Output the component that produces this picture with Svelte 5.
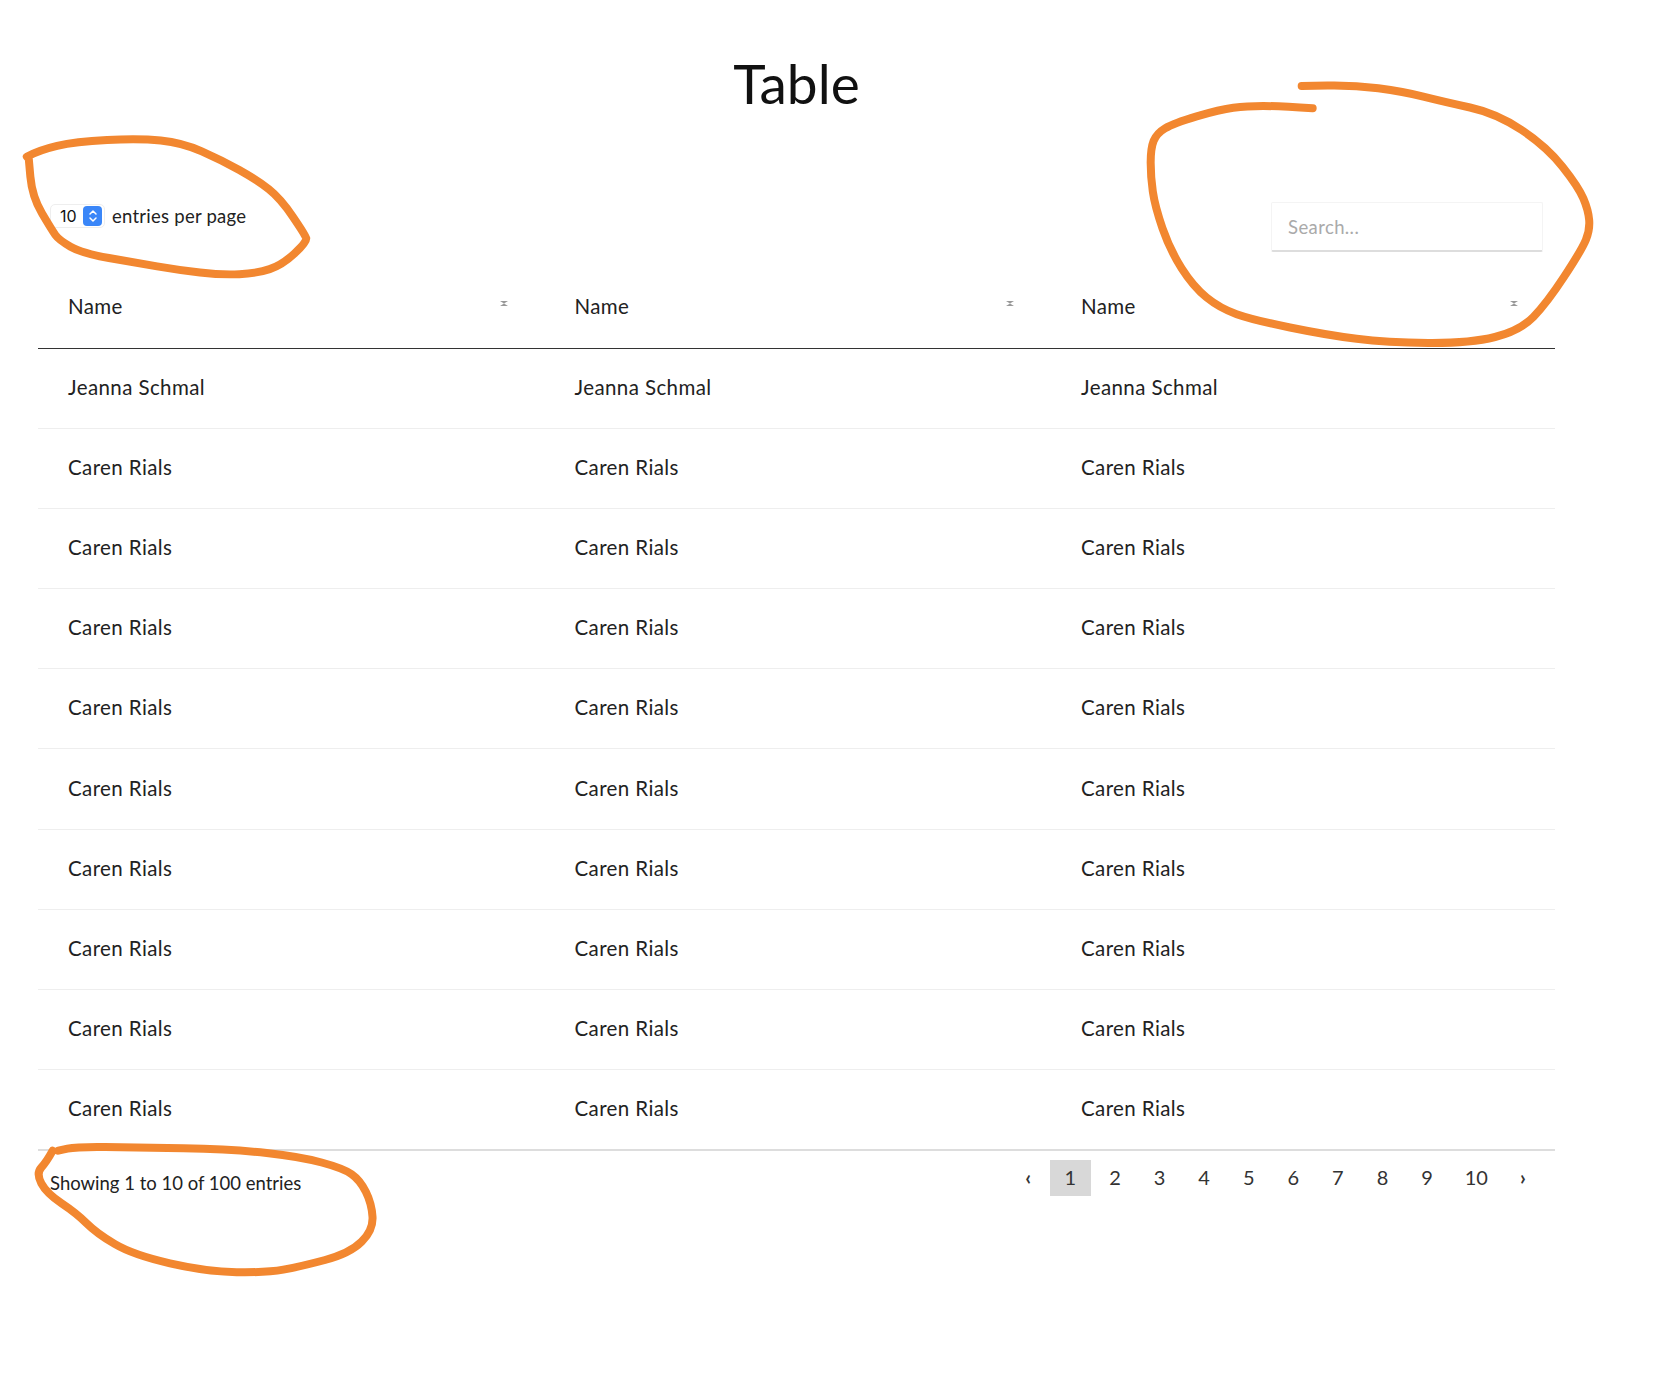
<script>
  const names = ['Jeanna Schmal', ...Array(9).fill('Caren Rials')];
  const pages = ['1', '2', '3', '4', '5', '6', '7', '8', '9', '10'];
  const columns = ['Name', 'Name', 'Name'];

  // hand drawn marks, points read off the screenshot
  const zoomed = (pts, ox, oy, kx, ky) => pts.map(([x, y]) => [ox + x / kx, oy + y / ky]);

  const marks = [
    zoomed([[75,170],[110,150],[210,125],[390,115],[510,128],[620,180],[720,240],[785,295],[855,405],[860,425],[790,495],[720,520],[620,525],[500,510],[380,488],[230,460],[165,420],[145,390],[90,290],[80,170]], 0, 100, 2.8, 3),
    zoomed([[578,145],[480,138],[380,138],[300,148],[160,190],[110,220],[92,265],[92,350],[105,440],[150,570],[220,680],[300,745],[400,780],[620,825],[800,848],[1050,850],[1200,812],[1280,730],[1385,570],[1410,510],[1405,450],[1375,380],[1280,260],[1130,160],[970,125],[850,95],[700,75],[545,78]], 1120, 60, 3, 3),
    zoomed([[158,92],[140,125],[108,160],[140,220],[230,280],[290,340],[400,405],[620,455],[800,458],[900,440],[1050,400],[1120,330],[1115,250],[1080,180],[1030,145],[900,110],[700,88],[400,82],[230,80],[175,92]], 0, 1120, 3, 3)
  ];

  function smooth(pts) {
    let d = `M${pts[0][0]} ${pts[0][1]}`;
    for (let i = 1; i < pts.length - 1; i++) {
      const mx = (pts[i][0] + pts[i + 1][0]) / 2;
      const my = (pts[i][1] + pts[i + 1][1]) / 2;
      d += ` Q${pts[i][0]} ${pts[i][1]} ${mx} ${my}`;
    }
    const last = pts[pts.length - 1];
    return d + ` L${last[0]} ${last[1]}`;
  }
</script>

<div class="page">
  <h1>Table</h1>

  <div class="toolbar">
    <div class="per-page">
      <div class="select">
        <span>10</span>
        <span class="stepper">
          <svg width="10" height="14" viewBox="0 0 10 14">
            <path d="M2 5 L5 2 L8 5 M2 9 L5 12 L8 9" fill="none" stroke="#fff" stroke-width="1.5" stroke-linecap="round" stroke-linejoin="round" />
          </svg>
        </span>
      </div>
      <span class="per-page-label">entries per page</span>
    </div>
    <input class="search" type="text" placeholder="Search..." />
  </div>

  <table>
    <thead>
      <tr>
        {#each columns as col}
          <th>
            <div class="th-inner">
              {col}
              <svg class="sort" width="8" height="5" viewBox="0 0 8 5">
                <path d="M0 0 H8 L4 2.5 L8 5 H0 L4 2.5 Z" fill="#999" />
              </svg>
            </div>
          </th>
        {/each}
      </tr>
    </thead>
    <tbody>
      {#each names as name}
        <tr>
          {#each columns as _}
            <td>{name}</td>
          {/each}
        </tr>
      {/each}
    </tbody>
  </table>

  <div class="footer">
    <div class="info">Showing 1 to 10 of 100 entries</div>
    <div class="pager">
      <span class="page-link arrow">‹</span>
      {#each pages as p, i}
        <span class="page-link" class:active={i === 0}>{p}</span>
      {/each}
      <span class="page-link arrow">›</span>
    </div>
  </div>

  <svg class="marks" width="1668" height="1398" viewBox="0 0 1668 1398">
    {#each marks as pts}
      <path d={smooth(pts)} fill="none" stroke="#f28730" stroke-width="8" stroke-linecap="round" stroke-linejoin="round" />
    {/each}
  </svg>
</div>

<style>
  :global(body) {
    margin: 0;
    background: #fff;
  }

  .page {
    position: relative;
    box-sizing: border-box;
    width: 1668px;
    min-height: 1398px;
    padding: 50px 113px 0 38px;
    font-family: Lato, "Open Sans", sans-serif;
    font-size: 20.5px;
    letter-spacing: 0.4px;
    color: #222;
  }

  h1 {
    margin: 0;
    font-size: 55px;
    font-weight: 400;
    line-height: 66px;
    letter-spacing: 0;
    text-align: center;
    color: #111;
  }

  .toolbar {
    display: flex;
    justify-content: space-between;
    align-items: flex-start;
    height: 62px;
    margin-top: 86px;
    padding-right: 12px;
  }

  .per-page {
    display: flex;
    align-items: center;
    gap: 7px;
    margin: 2px 0 0 12px;
    font-size: 18.5px;
  }

  .per-page-label {
    letter-spacing: 0.25px;
  }

  .select {
    display: flex;
    align-items: center;
    justify-content: space-between;
    box-sizing: border-box;
    width: 55px;
    height: 24px;
    padding: 0 2px 0 9px;
    border: 1px solid #eee;
    border-radius: 5px;
    font-family: Inter, sans-serif;
    font-size: 16px;
    letter-spacing: 0;
    color: #111;
  }

  .stepper {
    display: flex;
    align-items: center;
    justify-content: center;
    width: 19px;
    height: 20px;
    border-radius: 4px;
    background: #3a86f8;
  }

  .search {
    box-sizing: border-box;
    width: 272px;
    height: 50px;
    padding: 0 16px;
    border: 1px solid #f4f4f4;
    border-bottom: 2px solid #ddd;
    border-radius: 2px;
    outline: none;
    font: inherit;
    font-size: 18.5px;
    letter-spacing: 0.4px;
  }

  .search::placeholder {
    color: #aaa;
  }

  table {
    width: 1517px;
    border-collapse: collapse;
    table-layout: fixed;
  }

  th {
    box-sizing: border-box;
    width: 506.5px;
    height: 84px;
    padding: 0 30px;
    border-bottom: 1px solid #333;
    font-weight: 400;
    text-align: left;
  }

  th:last-child {
    width: auto;
  }

  .th-inner {
    position: relative;
  }

  .sort {
    position: absolute;
    top: 7px;
    right: 7px;
  }

  td {
    box-sizing: border-box;
    height: 80.2px;
    padding: 0 30px 3px;
    border-bottom: 1px solid #eee;
  }

  tbody tr:last-child td {
    border-bottom: 2px solid #ddd;
  }

  .footer {
    display: flex;
    justify-content: space-between;
    align-items: flex-start;
    padding: 9px 14px 0 12px;
  }

  .info {
    margin-top: 12px;
    font-size: 18.5px;
    letter-spacing: 0;
  }

  .pager {
    display: flex;
    gap: 3.6px;
  }

  .page-link {
    box-sizing: border-box;
    min-width: 41px;
    height: 36px;
    padding: 0 13.5px;
    font-size: 20px;
    letter-spacing: 0;
    line-height: 34px;
    text-align: center;
    color: #333;
  }

  .page-link.arrow {
    min-width: 36px;
    font-weight: 700;
  }

  .page-link.active {
    background: #d8d8d8;
  }

  .marks {
    position: absolute;
    top: 0;
    left: 0;
    pointer-events: none;
  }
</style>
